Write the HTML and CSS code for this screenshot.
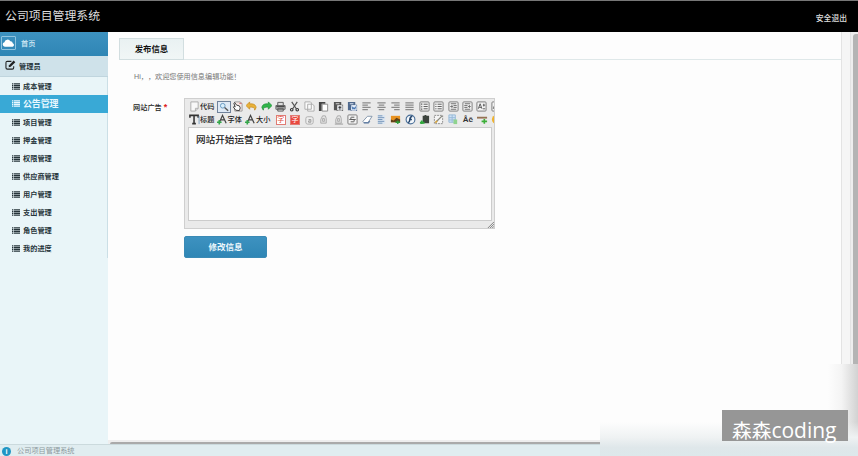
FILE: index.html
```html
<!DOCTYPE html>
<html lang="zh-CN">
<head>
<meta charset="utf-8">
<title>公司项目管理系统</title>
<link rel="stylesheet" href="styles.css">
</head>
<body>
<svg class="defs" width="0" height="0">
  <symbol id="list" viewBox="0 0 8 7"><path d="M0 .8h1.4M2 .8h6M0 2.6h1.4M2 2.6h6M0 4.4h1.4M2 4.4h6M0 6.2h1.4M2 6.2h6" stroke="currentColor" stroke-width="1.3"/></symbol>
  <symbol id="lines-l" viewBox="0 0 12 12"><path d="M1.500 2h9M1.500 4.500h6M1.500 7h9M1.500 9.500h6" stroke="#8b8b8b" stroke-width="1.300"/></symbol>
  <symbol id="lines-c" viewBox="0 0 12 12"><path d="M1.500 2h9M3 4.500h6M1.500 7h9M3 9.500h6" stroke="#8b8b8b" stroke-width="1.300"/></symbol>
  <symbol id="lines-r" viewBox="0 0 12 12"><path d="M1.500 2h9M4.500 4.500h6M1.500 7h9M4.500 9.500h6" stroke="#8b8b8b" stroke-width="1.300"/></symbol>
  <symbol id="lines-j" viewBox="0 0 12 12"><path d="M1.500 2h9M1.500 4.500h9M1.500 7h9M1.500 9.500h9" stroke="#8b8b8b" stroke-width="1.300"/></symbol>
  <symbol id="box" viewBox="0 0 12 12"><rect x="1" y="1" width="10" height="10" rx="1" fill="#f2f2f2" stroke="#777"/></symbol>
  <symbol id="page" viewBox="0 0 12 12"><path d="M2 1h8v7l-3 3H2zM7 11V8h3" fill="#f8f8f8" stroke="#aaa"/></symbol>
  <symbol id="ghost" viewBox="0 0 12 12"><path d="M3 10V6l2-4h3l1 3v5zM5 5h2v3H5z" fill="#e4e4e4" stroke="#aaa"/></symbol>
  <symbol id="font" viewBox="0 0 12 12"><path d="M2.500 9.500 6 1.500 10 10M4 6.500h4" fill="none" stroke="#444" stroke-width="1.300"/><path d="M0 9h5M2.500 6.500v5" stroke="#35a84a" stroke-width="1.800"/></symbol>
</svg>

<header class="topbar"><h1>公司项目管理系统</h1><a class="logout">安全退出</a></header>

<div class="body">
  <nav class="sidebar">
    <a class="home"><span class="cloud"><svg viewBox="0 0 14 12"><path d="M3 10a2.500 2.500 0 0 1-.4-4.900A3.500 3.500 0 0 1 9 4a2.500 2.500 0 0 1 2.600 2.200A2 2 0 0 1 11.500 10z" fill="#fff"/></svg></span>首页</a>
    <div class="group"><svg viewBox="0 0 12 11"><path d="M7 1.500H2.500Q1 1.500 1 3v5.500Q1 10 2.500 10H8q1.500 0 1.500-1.500V7" fill="none" stroke="#222" stroke-width="1.200"/><path d="M4 8l.4-2.300L9.500.600l1.800 1.800L6.200 7.500z" fill="#222"/></svg>管理员</div>
    <ul class="menu">
      <li><svg><use href="#list"/></svg>成本管理</li>
      <li class="active"><svg><use href="#list"/></svg>公告管理</li>
      <li><svg><use href="#list"/></svg>项目管理</li>
      <li><svg><use href="#list"/></svg>押金管理</li>
      <li><svg><use href="#list"/></svg>权限管理</li>
      <li><svg><use href="#list"/></svg>供应商管理</li>
      <li><svg><use href="#list"/></svg>用户管理</li>
      <li><svg><use href="#list"/></svg>支出管理</li>
      <li><svg><use href="#list"/></svg>角色管理</li>
      <li><svg><use href="#list"/></svg>我的进度</li>
    </ul>
  </nav>

  <div class="frame">
    <main class="content">
      <div class="tabs"><span class="tab">发布信息</span></div>
      <p class="hint">Hi，，欢迎您使用信息编辑功能！</p>
      <div class="row">
        <label>网站广告<b>*</b></label>
        <div class="editor">
          <div class="tools">
            <span class="wide"><svg><use href="#page"/></svg>代码</span>
            <span class="t on"><svg viewBox="0 0 12 12"><circle cx="4.500" cy="4.500" r="2.800" fill="#d9eefb" stroke="#6b9cc4" stroke-width="1.200"/><path d="M6.700 6.700 11 10.500" stroke="#555" stroke-width="1.700"/></svg></span>
            <span class="t"><svg viewBox="0 0 12 12"><path d="M3 1h6l2 2v8H3z" fill="#f7e9e6" stroke="#999"/><path d="M4 10 1.500 6.500l1-.8 1 .8-1.500-4 1-.7L5 4.500l3 .8 1 2.200-1 3z" fill="#fff" stroke="#333"/><path d="M8 2.500h2.500" stroke="#c55"/></svg></span>
            <span class="t"><svg viewBox="0 0 12 12"><path d="M0 5 4 1v2.300c4-.8 7 1 7 4L9.500 10C9.500 7 7.500 6.500 4 6.700V9z" fill="#e9b23a" stroke="#c58a20" stroke-width=".8"/></svg></span>
            <span class="t"><svg viewBox="0 0 12 12"><path d="M12 5 8 1v2.300c-4-.8-7 1-7 4L2.500 10C2.500 7 4.500 6.500 8 6.700V9z" fill="#30b54a" stroke="#219038" stroke-width=".8"/></svg></span>
            <span class="t"><svg viewBox="0 0 12 12"><path d="M3 5V1.500h6V5M1 5h10v4H1zM3 8h6v3H3z" fill="#ddd" stroke="#555"/><path d="M1.500 5.500h9v1.500h-9z" fill="#444"/></svg></span>
            <span class="t"><svg viewBox="0 0 12 12"><path d="M3 1l5 7.500M9 1 4 8.500" stroke="#555" stroke-width="1.300"/><circle cx="3" cy="9.500" r="1.400" fill="none" stroke="#333" stroke-width="1.200"/><circle cx="9" cy="9.500" r="1.400" fill="none" stroke="#333" stroke-width="1.200"/></svg></span>
            <span class="t"><svg viewBox="0 0 12 12"><path d="M1 1h6l1 1v7H1zM4 3.500h5L11 5v6H4z" fill="#fafafa" stroke="#aaa"/></svg></span>
            <span class="t"><svg viewBox="0 0 12 12"><path d="M1 1h7v2H4v8H1z" fill="#444"/><path d="M4.500 3.500h6V11h-6z" fill="#fff" stroke="#888"/></svg></span>
            <span class="t"><svg viewBox="0 0 12 12"><path d="M1 1h8v3h2v7H4V10H1z" fill="#555"/><path d="M5 5h5v5H5zM3 3h4" fill="#d8dde4" stroke="#ddd"/><path d="M7.500 5.500v4M6 7h3" stroke="#333"/></svg></span>
            <span class="t"><svg viewBox="0 0 12 12"><path d="M1 1h8v3h2v7H4V10H1z" fill="#50698d"/><path d="M5 5h5v5H5zM3 3h4" fill="#e4edfa" stroke="#e4edfa"/><path d="m5.500 6 1 3 1-2 1 2 1-3" fill="none" stroke="#3568a8"/></svg></span>
            <span class="t"><svg><use href="#lines-l"/></svg></span>
            <span class="t"><svg><use href="#lines-c"/></svg></span>
            <span class="t"><svg><use href="#lines-r"/></svg></span>
            <span class="t"><svg><use href="#lines-j"/></svg></span>
            <span class="t"><svg viewBox="0 0 12 12"><use href="#box"/><path d="M3 2.500v2M3 5.500v1.500M3 8v2M5 3.500h4.500M5 6h4.500M5 8.500h4.500" stroke="#555"/></svg></span>
            <span class="t"><svg viewBox="0 0 12 12"><use href="#box"/><path d="M2.500 3.500h1.300M2.500 6h1.300M2.500 8.500h1.300M5 3.500h4.500M5 6h4.500M5 8.500h4.500" stroke="#555"/></svg></span>
            <span class="t"><svg viewBox="0 0 12 12"><use href="#box"/><path d="M3 3h6M6 5h3.500M6 7h3.500M3 9h6M2.500 6h2.500M4 4.500 5 6 4 7.500" fill="none" stroke="#666"/></svg></span>
            <span class="t"><svg viewBox="0 0 12 12"><use href="#box"/><path d="M3 3h6M2.500 5H6M2.500 7H6M3 9h6M7 6h2.500M8.500 4.500 7 6l1.500 1.500" fill="none" stroke="#666"/></svg></span>
            <span class="t"><svg viewBox="0 0 12 12"><use href="#box"/><path d="m2.500 8.500 2-5.500 2 5.500M3.500 7h2M7.500 4.500h2.500M8.500 3v3M7.500 8.500h2.500" fill="none" stroke="#555"/></svg></span>
            <span class="t"><svg viewBox="0 0 12 12"><use href="#box"/><path d="m2.500 8.500 2-5.500 2 5.500M3.500 7h2" fill="none" stroke="#555"/></svg></span>
          </div>
          <div class="tools second">
            <span class="wide"><svg viewBox="0 0 12 12"><path d="M1 4V1.500h9V4M5.500 1.500V11M3.500 10.500h4" fill="none" stroke="#333" stroke-width="1.700"/><path d="M11 2v9" stroke="#7aa0c4"/></svg>标题</span>
            <span class="wide mid"><svg><use href="#font"/></svg>字体</span>
            <span class="wide mid"><svg><use href="#font"/></svg>大小</span>
            <span class="t"><i class="zi">字</i></span>
            <span class="t"><i class="zi fill">字</i></span>
            <span class="t"><svg viewBox="0 0 12 12"><rect x="2" y="3" width="8" height="8" rx="2" fill="#eee" stroke="#aaa"/><path d="M5 6h2.500v3H5V7.500h2" fill="none" stroke="#999"/></svg></span>
            <span class="t"><svg><use href="#ghost"/></svg></span>
            <span class="t"><svg viewBox="0 0 12 12"><use href="#ghost"/><path d="M2 11h9" stroke="#999"/></svg></span>
            <span class="t"><svg viewBox="0 0 12 12"><use href="#box"/><path d="M8 3.500H5Q4 3.500 4 4.700T6 6t2 1.300T7 8.500H4M2.500 6h7" fill="none" stroke="#555"/></svg></span>
            <span class="t"><svg viewBox="0 0 12 12"><path d="m1 8 5-5.500h5L6.500 9.500H2z" fill="#fff" stroke="#7f93a8"/><path d="M2 9.500h5L8.500 7.500" fill="none" stroke="#6681a5" stroke-width="1.500"/></svg></span>
            <span class="t"><svg viewBox="0 0 12 12"><path d="M2 1h8v10H2z" fill="#dce6f1"/><path d="M2 2h5M2 4h7M2 6h5M2 8h7M2 10h5" stroke="#6d8fb5"/></svg></span>
            <span class="t"><svg viewBox="0 0 12 12"><path d="M1 2h10v7H1z" fill="#e89220"/><path d="m1 6 3 1 3-3 4 2v3H1z" fill="#614119"/><path d="M6 9h5M8.500 7v4" stroke="#2f9b36" stroke-width="1.500"/></svg></span>
            <span class="t"><svg viewBox="0 0 12 12"><circle cx="6" cy="6" r="4.800" fill="#f4f8fc" stroke="#4a6f98" stroke-width="1.200"/><path d="M8 2.500Q5.500 3 5.300 6T3.500 9.500M4.500 6h3" fill="none" stroke="#24456c" stroke-width="1.700"/></svg></span>
            <span class="t"><svg viewBox="0 0 12 12"><path d="M4 2h2V1h2v1h3v8H4z" fill="#3d443e"/><path d="M1 9.500h5M3 7v4" stroke="#2fa83c" stroke-width="2"/></svg></span>
            <span class="t"><svg viewBox="0 0 12 12"><path d="M1.500 1.500h9v9h-9z" fill="#f4f4f4" stroke="#888" stroke-dasharray="2 1"/><path d="m3 9 7-7" stroke="#8a8a80" stroke-width="1.400"/><path d="m2.500 9.500 2-2" stroke="#d9a53a" stroke-width="1.600"/></svg></span>
            <span class="t"><svg viewBox="0 0 12 12"><path d="M1 1h7v8H1z" fill="#cfe2f4" stroke="#95b8d8"/><path d="M1 4h7M1 6.500h7M4.500 1v8" stroke="#95b8d8"/><path d="M6 6h4v5H6z" fill="#8fd38e"/></svg></span>
            <span class="t"><b class="accent">Åč</b></span>
            <span class="t"><svg viewBox="0 0 12 12"><path d="M0 4h11" stroke="#947252" stroke-width="2"/><path d="M5 8h6M8 5.500v5" stroke="#3caf38" stroke-width="1.800"/></svg></span>
            <span class="t"><svg viewBox="0 0 12 12"><circle cx="6" cy="6" r="5" fill="#f0b32e"/></svg></span>
          </div>
          <div class="area">网站开始运营了哈哈哈</div>
          <svg class="grip" viewBox="0 0 8 8"><path d="M1 8 8 1M3.500 8 8 3.500M6 8l2-2" stroke="#777"/></svg>
        </div>
      </div>
      <button class="submit">修改信息</button>
    </main>
    <div class="hscroll"><i></i></div>
    <div class="gutter"></div>
    <div class="vscroll"><i></i></div>
  </div>
</div>

<footer class="footer"><span class="info">i</span>公司项目管理系统</footer>
<div class="haze-right"></div>
<div class="haze-bottom"></div>
<div class="watermark">森森<span>coding</span></div>
</body>
</html>
```

FILE: styles.css
```css
* { box-sizing: border-box; }
body {
  margin: 0;
  width: 858px;
  height: 456px;
  overflow: hidden;
  display: flex;
  flex-direction: column;
  position: relative;
  font: 7.2px/1 "Liberation Sans", "Noto Sans CJK SC", sans-serif;
  text-spacing-trim: space-all;
  color: #222;
  background: #fdfdfd;
}
svg { display: block; flex: none; }
.defs { position: absolute; }

.topbar {
  height: 32px;
  flex: none;
  display: flex;
  justify-content: space-between;
  padding: 0 11px 0 5px;
  background: #000;
  border-top: 1px solid #777;
  color: #ddd;
}
.topbar h1 { margin: 0; font-size: 11.9px; font-weight: 400; line-height: 30px; }
.logout { line-height: 35px; font-size: 7.8px; font-weight: 500; }

.body { height: 412px; flex: none; display: flex; }
.sidebar { width: 108px; flex: none; background: #e9f5f8; color: #26343a; font-weight: 600; }
.home {
  height: 24px;
  display: flex;
  align-items: center;
  gap: 5px;
  padding-left: 1px;
  color: #d9edf7;
  background: linear-gradient(#3d92c0, #2f86b5);
  font-weight: 500;
}
.cloud {
  width: 15px;
  height: 14px;
  margin-top: -2px;
  border: 1px solid #8fc4e0;
  border-radius: 1px;
}
.cloud svg { width: 13px; height: 12px; }
.group {
  height: 21px;
  display: flex;
  align-items: center;
  gap: 3px;
  padding: 1px 0 0 5px;
  background: #cfe2ea;
  border-bottom: 1px solid #c0d5de;
}
.group svg { width: 11px; height: 10px; margin-top: -4px; }
.menu { height: 181px; margin: 0; padding: 0; list-style: none; border-right: 1px solid #cbdfe6; }
.menu li { height: 18px; display: flex; align-items: center; gap: 3px; padding: 1px 0 0 12px; }
.menu svg { width: 8px; height: 7px; margin-top: -1px; }
.menu .active { margin-right: -1px; padding-top: 0; background: #39a9d6; color: #e8f8ff; font-size: 8.9px; }

.frame {
  flex: 1;
  display: grid;
  grid-template: 408px 4px / 733px 10px 7px;
}
.content { padding: 6px 0 0 11px; }
.tabs { height: 22px; border-bottom: 1px solid #dfe8e9; }
.tab {
  display: block;
  width: 65px;
  height: 22px;
  border: 1px solid #d2dee0;
  background: linear-gradient(#e9f1f2, #f1f6f6);
  text-align: center;
  font-size: 8.4px;
  font-weight: 700;
  line-height: 20px;
  color: #111;
}
.hint { margin: 12px 0 0 15px; height: 10px; line-height: 10px; color: #777; font-size: 7.15px; white-space: nowrap; }
.row { display: flex; margin-top: 16px; }
.row label { width: 65px; padding: 6px 0 0 14px; font-weight: 500; white-space: nowrap; }
.row label b { color: #e02020; margin-left: 2px; font-size: 9px; line-height: 7px; }
.editor {
  position: relative;
  width: 311px;
  height: 131px;
  padding: 1px 3px 0;
  border: 1px solid #cfcfcf;
  background: #eaeaea;
}
.tools { height: 13px; margin-right: -3px; padding-left: 1px; display: flex; align-items: center; overflow: hidden; }
.t { width: 14.4px; height: 13px; flex: none; display: flex; align-items: center; justify-content: center; }
.tools svg { width: 11px; height: 11px; }
.tools .on { width: 14px; height: 12px; background: #dfe9f5; border: 1px solid #70829b; margin-right: -.4px; }
.on svg { width: 10px; height: 10px; }
.wide { width: 27.5px; flex: none; display: flex; align-items: center; font-weight: 500; white-space: nowrap; }
.mid { width: 28.5px; }
.zi { width: 10px; height: 10px; border: 1px solid #e07b74; color: #e04b40; background: #fff; font-style: normal; font-size: 7px; line-height: 8px; text-align: center; }
.zi.fill { background: #e9483e; color: #fff; }
.accent { font-size: 8px; color: #333; }
.area {
  width: 304px;
  height: 94px;
  margin-top: 1px;
  padding: 6px 7px;
  border: 1px solid #ccc;
  background: #fdfdfd;
  font-size: 9.65px;
  font-weight: 500;
  line-height: 12px;
}
.grip { position: absolute; right: 0; bottom: 0; width: 7px; height: 7px; }
.submit {
  display: block;
  width: 83px;
  height: 22px;
  margin: 7px 0 0 65px;
  padding: 0;
  border: 1px solid #3a8ab5;
  border-radius: 2px;
  background: linear-gradient(#3d92c0, #2f86b5);
  color: #edf7fc;
  font: 700 8.5px/20px "Liberation Sans", "Noto Sans CJK SC", sans-serif;
}
.gutter { grid-area: 1 / 2; background: #f5f5f5; border: solid #e3e3e3; border-width: 0 1px; }
.vscroll { grid-area: 1 / 3 / 3 / 4; background: #eee; padding: 2px 0 0 2px; }
.vscroll i { display: block; height: 410px; border-radius: 3px 0 0 0; background: #b4b4b4; }
.hscroll { grid-area: 2 / 1 / 3 / 3; background: #eee; padding: 2px 0 0 2px; }
.hscroll i { display: block; height: 2px; border-radius: 2px 0 0 0; background: #aaa; }

.footer {
  height: 12px;
  display: flex;
  align-items: center;
  gap: 6px;
  padding: 1px 0 0 2px;
  border-top: 1px solid #cbdadd;
  background: #e0edf0;
  color: #8b989c;
}
.info { width: 9px; height: 9px; border-radius: 50%; background: #2196c4; color: #fff; font-weight: 700; line-height: 9px; text-align: center; }

.haze-right {
  position: absolute;
  left: 828px;
  top: 364px;
  width: 30px;
  height: 92px;
  background: linear-gradient(90deg, #fdfdfd, #f4f4f4 45%, #d2d2d2);
}
.haze-bottom {
  position: absolute;
  left: 600px;
  top: 422px;
  width: 258px;
  height: 34px;
  background: linear-gradient(rgba(253,253,253,0), #eff2f3 45%, #dfe7ea 75%, #dde8eb);
}
.watermark {
  position: absolute;
  left: 722px;
  top: 410px;
  width: 126px;
  height: 31px;
  padding-left: 10px;
  background: #969696;
  color: #fff;
  font: 19.7px/40px "Open Sans", "Noto Sans CJK SC", sans-serif;
  white-space: nowrap;
}
.watermark span { font-size: 21px; }
```
